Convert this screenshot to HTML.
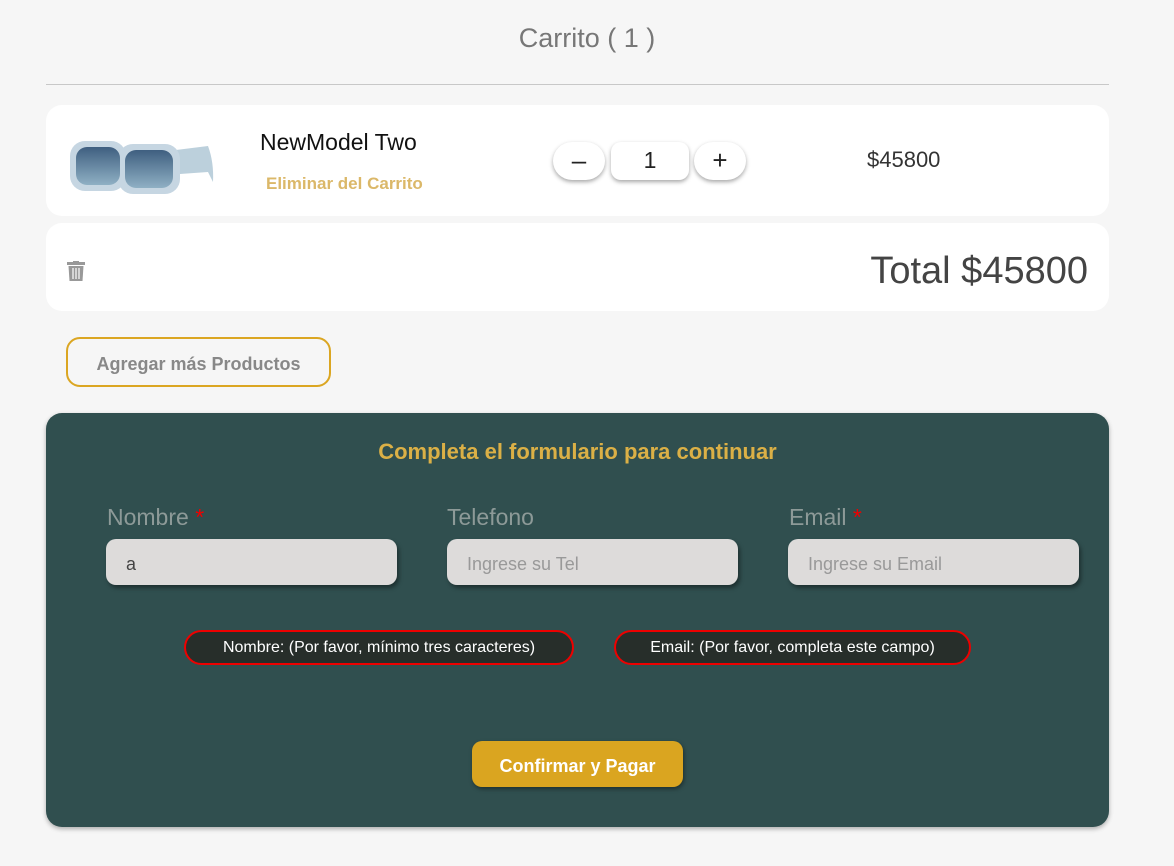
<!DOCTYPE html>
<html><head><meta charset="utf-8"><style>
*{box-sizing:border-box;margin:0;padding:0}
body{width:1174px;height:866px;background:#f6f6f6;font-family:"Liberation Sans",sans-serif;position:relative;overflow:hidden}
.a{position:absolute}
.card{background:#fff;border-radius:16px}
.qb{position:absolute;top:142px;width:52px;height:38px;border-radius:19px;background:#fff;box-shadow:0 2px 4px rgba(0,0,0,.35);font-size:26px;text-align:center;line-height:36px;color:#222}
.lbl{position:absolute;top:504px;font-size:23px;color:#8d9a98}
.lbl b{color:#e00;font-weight:normal}
.inp{position:absolute;top:539px;width:291px;height:46px;background:#dddbda;border-radius:10px;box-shadow:2px 3px 4px rgba(0,0,0,.4);font-size:18px;color:#999;padding:15px 20px 0}
.err{position:absolute;top:630px;height:35px;border:2px solid #e00;border-radius:18px;background:#272e2a;color:#fff;font-size:16px;text-align:center;line-height:31px}
</style></head><body>
<div class="a" style="left:0;width:1174px;top:23px;text-align:center;font-size:27px;color:#777">Carrito ( 1 )</div>
<div class="a" style="left:46px;top:84px;width:1063px;height:1px;background:#c8c8c8"></div>
<div class="a card" style="left:46px;top:105px;width:1063px;height:111px"></div>
<svg class="a" style="left:68px;top:138px" width="150" height="60" viewBox="0 0 150 60">
<defs><linearGradient id="g" x1="0" y1="0" x2="0" y2="1"><stop offset="0" stop-color="#3f5f80"/><stop offset="1" stop-color="#8fb0c4"/></linearGradient></defs>
<path d="M108 12 L140 8 Q146 24 145 44 L140 34 L112 36Z" fill="#bcd0dc"/>
<rect x="2" y="3" width="56" height="50" rx="15" fill="#c6d6e2"/>
<rect x="50" y="6" width="62" height="50" rx="15" fill="#c6d6e2"/>
<rect x="8" y="9" width="44" height="38" rx="11" fill="url(#g)"/>
<rect x="57" y="12" width="48" height="38" rx="11" fill="url(#g)"/>
</svg>
<div class="a" style="left:260px;top:129px;font-size:23px;color:#111">NewModel Two</div>
<div class="a" style="left:266px;top:174px;font-size:17px;font-weight:bold;color:#dbb869">Eliminar del Carrito</div>
<div class="qb" style="left:553px">–</div>
<div class="qb" style="left:611px;width:78px;border-radius:10px;font-size:23px">1</div>
<div class="qb" style="left:694px">+</div>
<div class="a" style="left:867px;top:147px;font-size:22px;color:#333">$45800</div>
<div class="a card" style="left:46px;top:223px;width:1063px;height:88px"></div>
<svg class="a" style="left:67px;top:261px" width="18" height="20" viewBox="0 0 18 20"><rect x="0" y="1" width="18" height="3" fill="#999"/><rect x="6" y="0" width="6" height="2" fill="#999"/><path d="M1.5 5h15l-1 15h-13z" fill="#999"/><path d="M6 7v11M9 7v11M12 7v11" stroke="#fff" stroke-width="1.2"/></svg>
<div class="a" style="right:86px;top:250px;font-size:38px;color:#444">Total $45800</div>
<div class="a" style="left:66px;top:337px;width:265px;height:50px;border:2px solid #dba622;border-radius:14px;font-size:18px;font-weight:bold;color:#888;text-align:center;line-height:50px">Agregar más Productos</div>
<div class="a" style="left:46px;top:413px;width:1063px;height:414px;background:#304f4f;border-radius:16px;box-shadow:0 2px 5px rgba(0,0,0,.3)"></div>
<div class="a" style="left:46px;width:1063px;top:439px;text-align:center;font-size:22px;font-weight:bold;color:#dbb046">Completa el formulario para continuar</div>
<div class="lbl" style="left:107px">Nombre <b>*</b></div>
<div class="lbl" style="left:447px">Telefono</div>
<div class="lbl" style="left:789px">Email <b>*</b></div>
<div class="inp" style="left:106px;color:#444">a</div>
<div class="inp" style="left:447px">Ingrese su Tel</div>
<div class="inp" style="left:788px">Ingrese su Email</div>
<div class="err" style="left:184px;width:390px">Nombre: (Por favor, mínimo tres caracteres)</div>
<div class="err" style="left:614px;width:357px">Email: (Por favor, completa este campo)</div>
<div class="a" style="left:472px;top:741px;width:211px;height:46px;background:#daa520;border-radius:10px;box-shadow:1px 2px 4px rgba(0,0,0,.4);color:#fff;font-weight:bold;font-size:18px;text-align:center;line-height:50px">Confirmar y Pagar</div>
</body></html>
